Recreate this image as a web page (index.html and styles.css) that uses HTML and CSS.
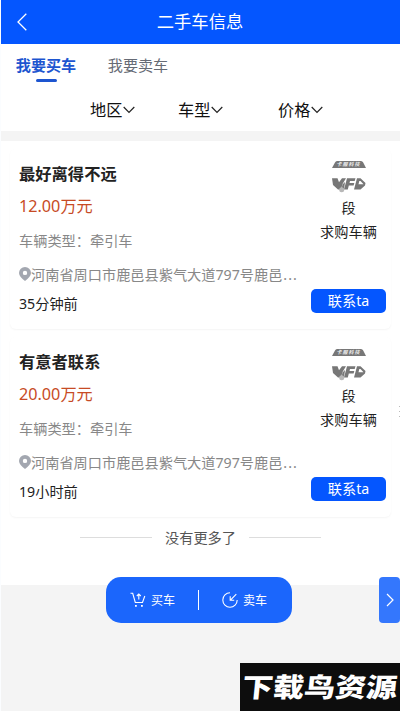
FILE: index.html
```html
<!DOCTYPE html>
<html lang="zh-CN">
<head>
<meta charset="utf-8">
<title>二手车信息</title>
<link rel="stylesheet" href="styles.css">
</head>
<body>
<svg class="defs" width="0" height="0" aria-hidden="true">
  <symbol id="pin" viewBox="0 0 12 14"><path fill="#a3a7b0" fill-rule="evenodd" d="M6 0a6 6 0 0 1 6 6c0 3-2.500 5-6 8C2.500 11 0 9 0 6a6 6 0 0 1 6-6zm0 3.700a2.200 2.200 0 1 0 0 4.400 2.200 2.200 0 0 0 0-4.400z"/></symbol>
  <symbol id="down" viewBox="0 0 12 8"><path fill="none" stroke="#222" stroke-width="1.200" d="M.7 1 6 6.500 11.300 1"/></symbol>
  <symbol id="brand" viewBox="0 0 34 32">
    <path fill="#777" d="M5 0h24q1.500 0 2.200 1.500L34 7H0l3-5.500Q3.700 0 5 0z"/>
    <path fill="#777" d="M0 17.200h5.500l1.500 4 3-4h4L10.500 23 9 28.500H6L1 24z"/>
    <path fill="#777" d="M10.500 23.500 13 21l-1 7.500H9.500z"/>
    <path fill="#777" d="M15 17.200h8.500l-.8 2.800H18l-.5 2h4.800l-.7 2.500h-4.800l-1 4h-3.800z"/>
    <path fill="#777" fill-rule="evenodd" d="M25 17.200h3.500l5 4.800-.5 2.500-4.500 4h-6.500zM27.300 20l-.8 3.200h5L28.500 20z"/>
    <circle cx="9.700" cy="28.800" r="2.500" fill="#b8b8b8"/>
  </symbol>
</svg>
<main class="app">
  <header class="header">
    <svg class="back" viewBox="0 0 10 18"><path d="M9.300.8 1 9l8.300 8.200"/></svg>
    <h1>二手车信息</h1>
  </header>
  <nav class="tabs">
    <span class="tab active">我要买车</span>
    <span class="tab">我要卖车</span>
  </nav>
  <div class="filters">
    <span class="filter">地区<svg><use href="#down"/></svg></span>
    <span class="filter">车型<svg><use href="#down"/></svg></span>
    <span class="filter">价格<svg><use href="#down"/></svg></span>
  </div>
  <section class="list">
    <article class="card">
      <div class="info">
        <h2>最好离得不远</h2>
        <p class="price">12.00万元</p>
        <p class="type">车辆类型：牵引车</p>
        <p class="address"><svg><use href="#pin"/></svg>河南省周口市鹿邑县紫气大道797号鹿邑<span class="dots">...</span></p>
        <p class="time">35分钟前</p>
      </div>
      <div class="side">
        <div class="logo"><svg><use href="#brand"/></svg><span>卡服科技</span></div>
        <p>段</p>
        <p>求购车辆</p>
        <button>联系ta</button>
      </div>
    </article>
    <article class="card">
      <div class="info">
        <h2>有意者联系</h2>
        <p class="price">20.00万元</p>
        <p class="type">车辆类型：牵引车</p>
        <p class="address"><svg><use href="#pin"/></svg>河南省周口市鹿邑县紫气大道797号鹿邑<span class="dots">...</span></p>
        <p class="time">19小时前</p>
      </div>
      <div class="side">
        <div class="logo"><svg><use href="#brand"/></svg><span>卡服科技</span></div>
        <p>段</p>
        <p>求购车辆</p>
        <button>联系ta</button>
      </div>
    </article>
    <div class="end"><span>没有更多了</span></div>
  </section>
  <div class="scroll-mark"></div>
  <div class="actions">
    <span class="action"><svg viewBox="0 0 16 16"><path d="M.5 1.300h2.200l2.600 9.200h7.200l2.300-6.500M8.800 7.500V2M6.800 4l2-2 2 2"/><path class="dot" d="M5 13h1.800v1.800H5zm6 0h1.800v1.800H11z"/></svg>买车</span>
    <i></i>
    <span class="action sell"><svg viewBox="0 0 16 16"><path d="M8 .8A7.200 7.200 0 1 0 15.200 8M14.300 2.200 8.200 8.300M8.200 4.300v4h4"/></svg>卖车</span>
  </div>
  <div class="drawer"><svg viewBox="0 0 8 14"><path d="M1 1l6 6-6 6"/></svg></div>
  <div class="watermark"><span>下载鸟资源</span></div>
</main>
</body>
</html>
```
FILE: styles.css
```css
* { box-sizing: border-box; }
body, h1, h2, p { margin: 0; }
body { background: #f4f4f4; font-family: "Noto Sans", "Noto Sans CJK SC", sans-serif; white-space: nowrap; }
.defs { position: absolute; }
.app { position: relative; width: 400px; height: 711px; overflow: hidden; border-left: 1px solid #fbfdff; }
.header { display: flex; align-items: center; height: 44px; padding: 0 16px; background: #0456ff; color: #fff; }
.header h1 { flex: 1; padding-right: 11px; text-align: center; font-size: 17.3px; font-weight: 400; line-height: 44px; }
.back { width: 10px; height: 18px; fill: none; stroke: #fff; stroke-width: 1.3; }
.tabs { display: flex; gap: 32px; height: 46px; padding-left: 15px; background: #fff; }
.tab { display: flex; flex-direction: column; align-items: center; width: 60px; font-size: 15.1px; line-height: 42px; color: #666b75; }
.tab.active { color: #1d55d0; font-weight: 700; }
.tab.active::after { content: ""; width: 21px; height: 3px; margin-top: -7px; border-radius: 2px; background: #1d55d0; }
.filters { display: flex; height: 41px; padding-left: 89px; background: #fff; color: #111; }
.filter { display: flex; align-items: center; width: 88px; height: 37px; font-size: 16.2px; }
.filter:nth-child(2) { width: 100px; }
.filter svg { width: 12px; height: 8px; margin: 3px 0 0 1px; }
.list { height: 454px; padding: 8px 9px 0 9px; border-top: 10px solid #f4f4f4; background: #fff; }
.card { display: flex; justify-content: space-between; height: 180px; margin-bottom: 8px; padding: 12px 5px 0 9px; border-radius: 6px; background: #fff; box-shadow: 0 1px 2px #0000000b; }
.info { color: #888; font-size: 14.2px; }
h2 { height: 26px; line-height: 27px; color: #222; font-size: 16.3px; font-weight: 700; }
.price { height: 39px; line-height: 39px; color: #c74b25; font-size: 16.2px; }
.type { height: 30px; line-height: 30px; }
.address { display: flex; align-items: center; height: 36px; }
.address svg { width: 12px; height: 14px; }
.dots { letter-spacing: 1px; margin-left: 1px; }
.time { height: 24px; line-height: 24px; color: #222; }
.side { display: flex; flex-direction: column; align-items: center; width: 75px; color: #222; font-size: 14.2px; }
.side p { height: 24px; line-height: 24px; }
.logo { position: relative; width: 34px; height: 35px; }
.logo svg { display: block; width: 34px; height: 32px; }
.logo span { position: absolute; left: 5px; top: 0; color: #eee; font-size: 5px; line-height: 7px; font-weight: 700; font-style: italic; letter-spacing: 1px; }
.side button { width: 75px; height: 24px; margin-top: 45px; padding: 0; border: 0; border-radius: 5px; background: #0456ff; color: #fff; font: 14.2px/24px "Noto Sans", "Noto Sans CJK SC", sans-serif; }
.end { display: flex; align-items: center; justify-content: center; gap: 13px; height: 24px; color: #555; font-size: 14.2px; }
.end::before, .end::after { content: ""; width: 72px; height: 1px; background: #ddd; }
.scroll-mark { position: absolute; right: 0; top: 406px; width: 1px; height: 12px; background: repeating-linear-gradient(#bbb 0 1px, #fff 1px 5px); }
.actions { position: absolute; left: 105px; top: 577px; display: flex; align-items: center; width: 186px; height: 46px; padding-left: 24px; border-radius: 15px; background: #1b66fc; color: #fff; font-size: 12px; }
.action { display: flex; align-items: center; gap: 5px; width: 68px; }
.action svg { width: 16px; height: 16px; fill: none; stroke: #fff; stroke-width: 1.1; }
.action .dot { fill: #fff; stroke: none; }
.actions i { width: 1px; height: 20px; background: #fff; }
.sell { margin-left: 23px; }
.drawer { position: absolute; right: 0; top: 577px; display: flex; align-items: center; justify-content: center; width: 21px; height: 46px; border-radius: 4px; background: #3477fd; }
.drawer svg { width: 8px; height: 14px; fill: none; stroke: #fff; stroke-width: 1.2; }
.watermark { position: absolute; right: 0; bottom: 0; width: 160px; height: 48px; background: #0d0d0d; color: #fff; font: 900 31px/46px "Noto Sans CJK SC", sans-serif; text-align: center; }
.watermark span { display: block; transform: scaleY(.86) skewX(-5deg); }
```
